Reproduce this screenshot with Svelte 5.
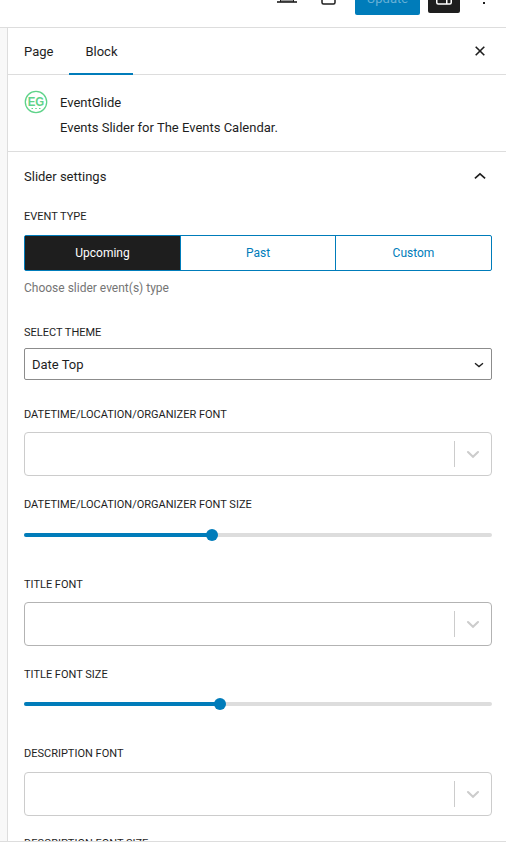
<script>
  const types = ['Upcoming', 'Past', 'Custom'];
  let active = $state('Upcoming');
  const fonts = [
    { name: 'Datetime/Location/Organizer font', thumb: 188, cls: 'first' },
    { name: 'Title font', thumb: 196, cls: 'hovered' },
    { name: 'Description font', thumb: 188, cls: 'last' }
  ];
</script>

<div class="editor">
  <header>
    <svg class="laptop" width="20" height="4" viewBox="0 0 20 4">
      <path d="M3 0h14v2H3z" fill="#999" />
      <path d="M3.500 0v2M16.500 0v2" stroke="#1e1e1e" />
      <path d="M0 1.200h20v1.600H0z" fill="#1e1e1e" />
    </svg>
    <svg class="device" width="15" height="6" viewBox="0 0 15 6">
      <path d="M1 0v2.500q0 1.500 1.500 1.500h10q1.500 0 1.500-1.500V0" fill="none" stroke="#1e1e1e" stroke-width="1.500" />
    </svg>
    <button class="update"><span>Update</span></button>
    <button class="settings" aria-label="Settings">
      <svg width="16" height="5" viewBox="0 0 16 5">
        <path d="M.75 0v2.500q0 1.500 1.500 1.500h11.500q1.500 0 1.500-1.500V0M10.750 0v4" fill="none" stroke="#fff" stroke-width="1.500" />
      </svg>
    </button>
    <i class="dot"></i>
  </header>

  <div class="body">
    <aside>
      <nav>
        <button class="tab">Page</button>
        <button class="tab on">Block</button>
        <svg class="close" width="24" height="24" viewBox="0 0 24 24">
          <path d="M7.700 7.700l8.600 8.600M16.300 7.700l-8.600 8.600" stroke="#1e1e1e" stroke-width="1.600" />
        </svg>
      </nav>

      <section class="card">
        <svg width="24" height="24" viewBox="0 0 24 24">
          <circle cx="12" cy="12" r="10.700" fill="none" stroke="#5fd38a" stroke-width="1.300" />
          <text x="12" y="16" text-anchor="middle" textLength="16.500" lengthAdjust="spacingAndGlyphs">EG</text>
          <path d="M7.500 18.500h1.500M11.250 18.500h1.500M15 18.500h1.500" stroke="#5fd38a" />
        </svg>
        <div>
          <h2>EventGlide</h2>
          <p>Events Slider for The Events Calendar.</p>
        </div>
      </section>

      <section class="panel">
        <div class="heading">
          <span>Slider settings</span>
          <svg width="24" height="24" viewBox="0 0 24 24">
            <path d="M6.900 13.300L12 8.900l5.100 4.400" fill="none" stroke="#1e1e1e" stroke-width="1.700" />
          </svg>
        </div>

        <div class="label type-label">Event type</div>
        <div class="segments">
          {#each types as type}
            <button class:chosen={active === type} onclick={() => (active = type)}>{type}</button>
          {/each}
        </div>
        <p class="help">Choose slider event(s) type</p>

        <div class="label theme-label">Select theme</div>
        <div class="theme">
          <span>Date Top</span>
          <svg width="10" height="6" viewBox="0 0 10 6">
            <path d="M1 1.300l4 3.200L9 1.300" fill="none" stroke="#1e1e1e" stroke-width="1.400" />
          </svg>
        </div>

        {#each fonts as font}
          <div class="font {font.cls}">
            <div class="label">{font.name}</div>
            <div class="combo">
              <i></i>
              <svg width="20" height="20" viewBox="0 0 20 20">
                <path d="M5 8l5 4.700L15 8" fill="none" stroke="#ccc" stroke-width="2.100" stroke-linecap="round" />
              </svg>
            </div>
            <div class="label size">{font.name} size</div>
            <div class="track">
              <div class="fill" style="width: {font.thumb}px"></div>
              <div class="thumb"></div>
            </div>
          </div>
        {/each}
      </section>
    </aside>
  </div>
</div>

<style>
  :global(body) { margin: 0; background: #fff; overflow: hidden; }
  .editor {
    width: 506px; height: 862px; overflow: hidden; background: #fff;
    font: 13px/18px Roboto, sans-serif; color: #1e1e1e;
  }
  .editor :global(*) { box-sizing: border-box; }
  button { font: inherit; padding: 0; margin: 0; border: 0; background: none; color: inherit; }
  svg { display: block; flex: none; }
  p, h2 { margin: 0; font: inherit; }
  header { height: 28px; border-bottom: 1px solid #ddd; display: flex; align-items: flex-start; overflow: hidden; }
  .laptop { margin-left: 277px; }
  .device { margin-left: 24px; }
  .update {
    margin-left: 19px; width: 65px; height: 36px; margin-top: -21px; border-radius: 2px;
    background: #007cba; color: #66b0d6;
  }
  .update span { display: block; padding-top: 3px; }
  .settings { margin-left: 8px; width: 32px; height: 32px; margin-top: -19px; border-radius: 2px; background: #1e1e1e; padding: 19px 8px 8px; }
  .dot { width: 2px; height: 2px; margin: 2px 0 0 23px; background: #1e1e1e; }
  .body { height: 814px; padding-left: 7px; background: #f8f8f8; border-bottom: 1px solid #ddd; overflow: hidden; }
  aside { height: 813px; background: #fff; border-left: 1px solid #ddd; overflow: hidden; }
  nav { display: flex; height: 47px; border-bottom: 1px solid #ddd; }
  .tab { height: 47px; padding: 0 15px 0 16px; }
  .on { width: 64px; margin-left: 1px; padding: 0 16px; box-shadow: inset 0 -2px #007cba; }
  .close { margin: 11px 14px 0 auto; }
  .card { height: 77px; padding: 15px 16px 0; display: flex; gap: 12px; border-bottom: 1px solid #ddd; }
  .card h2 { margin: 4px 0 7px; }
  .card text { font: 700 12.500px "Liberation Sans", sans-serif; fill: #5fd38a; }
  .panel { padding: 0 14px 0 16px; }
  .heading { height: 49px; display: flex; justify-content: space-between; align-items: center; }
  .label { font-size: 11px; line-height: 16px; text-transform: uppercase; white-space: nowrap; }
  .type-label { margin-top: 8px; }
  .segments { display: flex; height: 36px; margin-top: 10px; border: 1px solid #007cba; border-radius: 2px; color: #007cba; width: 468px; font-size: 12px; }
  .segments button { flex: 0 0 155px; }
  .segments button:last-child { flex: 1; }
  .segments button + button { border-left: 1px solid #007cba; }
  .segments .chosen { background: #1e1e1e; color: #fff; }
  .help { margin-top: 8px; color: #757575; font-size: 12px; }
  .theme-label { margin-top: 28px; }
  .theme {
    width: 468px; height: 32px; margin-top: 7px; padding: 1px 7px 0; border: 1px solid #8c8c8c; border-radius: 2px;
    display: flex; align-items: center; justify-content: space-between;
  }
  .font { width: 468px; height: 170px; }
  .first { margin-top: 27px; }
  .hovered { height: 169px; }
  .combo { height: 44px; margin-top: 9px; border: 1px solid #ccc; border-radius: 4px; display: flex; align-items: center; justify-content: flex-end; }
  .last .combo { margin-top: 10px; }
  .combo i { width: 1px; height: 26px; background: #ccc; }
  .combo svg { margin: 0 8px; }
  .hovered .combo { border-color: #b3b3b3; }
  .size { margin-top: 21px; }
  .last .size { margin-top: 20px; }
  .track { height: 4px; margin-top: 20px; background: #ddd; border-radius: 2px; display: flex; align-items: center; }
  .hovered .track { margin-top: 19px; }
  .fill { height: 4px; background: #007cba; border-radius: 2px; }
  .thumb { width: 12px; height: 12px; border-radius: 50%; background: #007cba; margin-left: -6px; flex: none; }
</style>
